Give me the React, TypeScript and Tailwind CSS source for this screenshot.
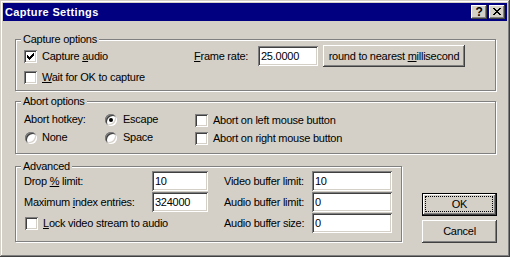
import React from "react";

function Check({ checked }: { checked?: boolean }) {
  return (
    <div className="relative w-[13px] h-[13px] shrink-0 bg-white shadow-[inset_1px_1px_#808080,inset_-1px_-1px_#ffffff,inset_2px_2px_#404040,inset_-2px_-2px_#d4d0c8]">
      {checked && (
        <svg
          className="absolute left-[3px] top-[3px]"
          width="7"
          height="7"
          viewBox="0 0 7 7"
          shapeRendering="crispEdges"
        >
          <path
            d="M6 0h1v3H6zM5 1h1v3H5zM4 2h1v3H4zM3 3h1v3H3zM2 4h1v3H2zM1 3h1v3H1zM0 2h1v3H0z"
            fill="#000"
          />
        </svg>
      )}
    </div>
  );
}

function Radio({ checked }: { checked?: boolean }) {
  return (
    <div className="relative w-[12px] h-[12px] shrink-0 rounded-full bg-white shadow-[inset_1px_1px_#808080,inset_-1px_-1px_#ffffff,inset_2px_2px_#404040,inset_-2px_-2px_#d4d0c8]">
      {checked && (
        <div className="absolute left-[4px] top-[4px] w-[4px] h-[4px] rounded-full bg-black" />
      )}
    </div>
  );
}

function Field({ w, value }: { w: string; value: string }) {
  return (
    <div
      className={`${w} h-[20px] shrink-0 bg-white pl-[3px] flex items-center leading-[13px] shadow-[inset_1px_1px_#808080,inset_-1px_-1px_#ffffff,inset_2px_2px_#404040,inset_-2px_-2px_#d4d0c8]`}
    >
      {value}
    </div>
  );
}

function Group({
  label,
  className,
  children,
}: {
  label: string;
  className: string;
  children: React.ReactNode;
}) {
  return (
    <div
      className={`relative shrink-0 border border-[#808080] shadow-[inset_1px_1px_#ffffff,1px_1px_#ffffff] ${className}`}
    >
      <div className="absolute -top-[7px] left-[5px] px-[2px] bg-[#d4d0c8] leading-[13px] whitespace-nowrap">
        {label}
      </div>
      {children}
    </div>
  );
}

function CheckRow({
  checked,
  children,
}: {
  checked?: boolean;
  children: React.ReactNode;
}) {
  return (
    <div className="flex items-center h-[13px]">
      <Check checked={checked} />
      <span className="ml-[5px] leading-[13px] whitespace-nowrap">{children}</span>
    </div>
  );
}

function RadioRow({
  checked,
  children,
  gap,
}: {
  checked?: boolean;
  children: React.ReactNode;
  gap: string;
}) {
  return (
    <div className="flex items-start h-[13px]">
      <div className="mt-[1px]">
        <Radio checked={checked} />
      </div>
      <span className={`${gap} leading-[13px] whitespace-nowrap`}>{children}</span>
    </div>
  );
}

export default function App() {
  return (
    <div className="w-[510px] h-[257px] bg-[#d4d0c8] p-[3px] flex flex-col text-[11px] tracking-[-0.25px] text-black font-['Liberation_Sans',Arial,sans-serif] shadow-[inset_-1px_-1px_#404040,inset_1px_1px_#d4d0c8,inset_-2px_-2px_#808080,inset_2px_2px_#ffffff]">
      {/* Caption */}
      <div className="h-[18px] shrink-0 bg-[#000080] flex items-start pl-[2px] pr-[2px]">
        <div className="flex-1 text-white font-bold tracking-[0.35px] leading-[18px] whitespace-nowrap">
          Capture Settings
        </div>
        <div className="mt-[2px] flex gap-[2px]">
          <div className="w-[16px] h-[14px] bg-[#d4d0c8] flex items-center justify-center font-bold text-[12px] leading-[14px] shadow-[inset_-1px_-1px_#404040,inset_1px_1px_#ffffff,inset_-2px_-2px_#808080,inset_2px_2px_#d4d0c8]">
            ?
          </div>
          <div className="relative w-[16px] h-[14px] bg-[#d4d0c8] shadow-[inset_-1px_-1px_#404040,inset_1px_1px_#ffffff,inset_-2px_-2px_#808080,inset_2px_2px_#d4d0c8]">
            <svg
              className="absolute left-[4px] top-[3px]"
              width="8"
              height="7"
              viewBox="0 0 8 7"
              shapeRendering="crispEdges"
            >
              <path
                d="M0 0h2v1H0zM6 0h2v1H6zM1 1h2v1H1zM5 1h2v1H5zM2 2h4v1H2zM3 3h2v1H3zM2 4h4v1H2zM1 5h2v1H1zM5 5h2v1H5zM0 6h2v1H0zM6 6h2v1H6z"
                fill="#000"
              />
            </svg>
          </div>
        </div>
      </div>

      {/* Body */}
      <div className="flex flex-col pl-[12px]">
        <Group label="Capture options" className="w-[481px] h-[52px] mt-[18px]">
          <div className="flex pt-[5px]">
            <div className="w-[178px] pl-[8px] pt-[5px] flex flex-col gap-[8px]">
              <CheckRow checked>
                Capture <span className="underline">a</span>udio
              </CheckRow>
              <CheckRow>
                <span className="underline">W</span>ait for OK to capture
              </CheckRow>
            </div>
            <div className="flex items-center h-[22px]">
              <span className="w-[64px] leading-[13px] whitespace-nowrap">
                <span className="underline">F</span>rame rate:
              </span>
              <Field w="w-[60px]" value="25.0000" />
              <div className="ml-[5px] w-[142px] h-[22px] flex items-center justify-center whitespace-pre bg-[#d4d0c8] shadow-[inset_-1px_-1px_#404040,inset_1px_1px_#ffffff,inset_-2px_-2px_#808080,inset_2px_2px_#d4d0c8]">
                <span>
                  round to nearest <span className="underline">m</span>illisecond
                </span>
              </div>
            </div>
          </div>
        </Group>

        <Group label="Abort options" className="w-[481px] h-[53px] mt-[10px]">
          <div className="grid grid-cols-[81px_90px_auto] gap-y-[4px] pl-[8px] pt-[11px]">
            <div className="h-[13px] leading-[13px] whitespace-nowrap">Abort hotkey:</div>
            <RadioRow checked gap="ml-[6px]">
              Escape
            </RadioRow>
            <div className="pt-[1px]">
              <CheckRow>Abort on left mouse button</CheckRow>
            </div>
            <div className="ml-[1px]">
              <RadioRow gap="ml-[5px]">None</RadioRow>
            </div>
            <RadioRow gap="ml-[6px]">Space</RadioRow>
            <div className="pt-[1px]">
              <CheckRow>Abort on right mouse button</CheckRow>
            </div>
          </div>
        </Group>

        <div className="flex items-start mt-[12px]">
          <Group label="Advanced" className="w-[387px] h-[76px]">
            <div className="grid grid-cols-[128px_56px_16px_88px_80px] auto-rows-[20px] gap-y-[1px] pl-[8px] pt-[4px] items-center">
              <div className="leading-[13px] whitespace-nowrap">
                Drop <span className="underline">%</span> limit:
              </div>
              <Field w="w-[56px]" value="10" />
              <div />
              <div className="leading-[13px] whitespace-nowrap">Video buffer limit:</div>
              <Field w="w-[80px]" value="10" />

              <div className="leading-[13px] whitespace-nowrap">
                Maximum <span className="underline">i</span>ndex entries:
              </div>
              <Field w="w-[56px]" value="324000" />
              <div />
              <div className="leading-[13px] whitespace-nowrap">Audio buffer limit:</div>
              <Field w="w-[80px]" value="0" />

              <div className="col-span-3 ml-[1px]">
                <CheckRow>
                  <span className="underline">L</span>ock video stream to audio
                </CheckRow>
              </div>
              <div className="leading-[13px] whitespace-nowrap">Audio buffer size:</div>
              <Field w="w-[80px]" value="0" />
            </div>
          </Group>

          <div className="ml-[20px] pt-[27px] flex flex-col gap-[4px]">
            <div className="relative w-[75px] h-[23px] border border-black flex items-center justify-center bg-[#d4d0c8] shadow-[inset_-1px_-1px_#404040,inset_1px_1px_#ffffff,inset_-2px_-2px_#808080,inset_2px_2px_#d4d0c8]">
              <div className="absolute left-[2px] top-[2px] right-[3px] bottom-[3px] border border-dotted border-black" />
              OK
            </div>
            <div className="w-[75px] h-[23px] flex items-center justify-center bg-[#d4d0c8] shadow-[inset_-1px_-1px_#404040,inset_1px_1px_#ffffff,inset_-2px_-2px_#808080,inset_2px_2px_#d4d0c8]">
              Cancel
            </div>
          </div>
        </div>
      </div>
    </div>
  );
}
